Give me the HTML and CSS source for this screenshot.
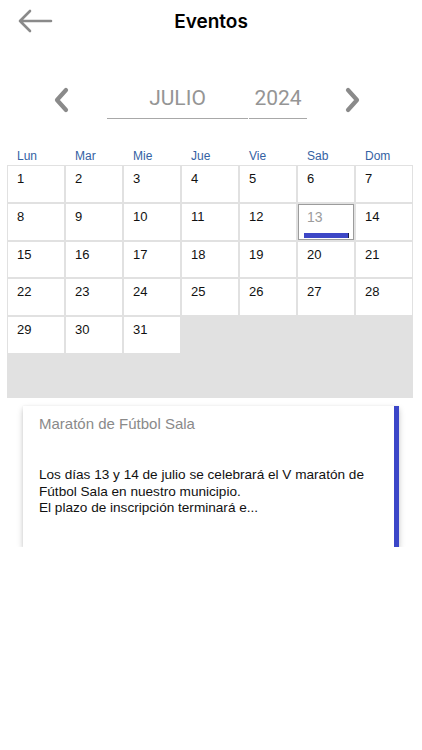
FILE: index.html
```html
<!DOCTYPE html>
<html lang="es">
<head>
<meta charset="utf-8">
<title>Eventos</title>
<link rel="stylesheet" href="styles.css">
</head>
<body>
<header class="topbar">
  <div class="back">
    <svg width="36" height="24" viewBox="0 0 36 24"><path d="M34 12H3 M13 2L3 12L13 22" fill="none" stroke="#8a8a8a" stroke-width="2.6" stroke-linecap="round" stroke-linejoin="round"/></svg>
  </div>
  <h1 class="title">Eventos</h1>
  <div></div>
</header>

<nav class="monthnav">
  <svg class="chev" width="16" height="26" viewBox="0 0 16 26"><path d="M13 3L4 13L13 23" fill="none" stroke="#8a8a8a" stroke-width="4.2" stroke-linecap="round" stroke-linejoin="round"/></svg>
  <div class="field month">JULIO</div>
  <div class="field year">2024</div>
  <svg class="chev right" width="16" height="26" viewBox="0 0 16 26"><path d="M3 3L12 13L3 23" fill="none" stroke="#8a8a8a" stroke-width="4.2" stroke-linecap="round" stroke-linejoin="round"/></svg>
</nav>

<div class="weekdays">
  <span>Lun</span><span>Mar</span><span>Mie</span><span>Jue</span><span>Vie</span><span>Sab</span><span>Dom</span>
</div>

<div class="calendar">
  <div class="day">1</div><div class="day">2</div><div class="day">3</div><div class="day">4</div><div class="day">5</div><div class="day">6</div><div class="day">7</div>
  <div class="day">8</div><div class="day">9</div><div class="day">10</div><div class="day">11</div><div class="day">12</div><div class="day selected">13<span class="event-bar"></span></div><div class="day">14</div>
  <div class="day">15</div><div class="day">16</div><div class="day">17</div><div class="day">18</div><div class="day">19</div><div class="day">20</div><div class="day">21</div>
  <div class="day">22</div><div class="day">23</div><div class="day">24</div><div class="day">25</div><div class="day">26</div><div class="day">27</div><div class="day">28</div>
  <div class="day">29</div><div class="day">30</div><div class="day">31</div>
</div>

<article class="card">
  <h2 class="card-title">Maratón de Fútbol Sala</h2>
  <p class="card-text">Los días 13 y 14 de julio se celebrará el V maratón de Fútbol Sala en nuestro municipio.<br>El plazo de inscripción terminará e...</p>
</article>
</body>
</html>
```

FILE: styles.css
```css
* { box-sizing: border-box; }
html, body { margin: 0; padding: 0; background: #fff; }
body {
  width: 422px;
  font-family: "Liberation Sans", Arial, sans-serif;
  color: #111;
}

.topbar {
  display: grid;
  grid-template-columns: 60px 1fr 60px;
  align-items: center;
  height: 42px;
}
.back {
  padding-left: 17px;
  display: flex;
  align-items: center;
  height: 42px;
}
.title {
  margin: 0;
  text-align: center;
  font-family: Inter, "Liberation Sans", sans-serif;
  font-size: 19px;
  font-weight: 600;
  color: #000;
}

.monthnav {
  display: flex;
  align-items: center;
  margin-top: 38px;
  height: 39px;
  padding-left: 53px;
}
.chev { display: block; }
.chev.right { margin-left: 38px; }
.field {
  height: 39px;
  line-height: 37px;
  border-bottom: 1px solid #a8a8a8;
  text-align: center;
  font-family: Roboto, "Liberation Sans", sans-serif;
  font-weight: 400;
  font-size: 21px;
  color: #959595;
}
.month { width: 141px; margin-left: 38px; }
.year { width: 58px; margin-left: 1px; }

.weekdays {
  display: grid;
  grid-template-columns: repeat(7, 56px);
  column-gap: 2px;
  margin: 30px 0 0 8px;
  height: 16px;
  line-height: 14px;
  font-size: 12px;
  color: #3462a3;
}
.weekdays span { padding-left: 9px; }

.calendar {
  display: grid;
  grid-template-columns: repeat(7, 56px);
  grid-auto-rows: 35.75px;
  gap: 2px;
  align-content: start;
  width: 406px;
  height: 233px;
  margin-left: 7px;
  padding: 1px;
  background: #e1e1e1;
}
.day {
  display: flex;
  flex-direction: column;
  background: #fff;
  padding: 5px 9px 0;
  font-size: 13px;
  line-height: 15px;
  color: #111;
}
.day.selected {
  border: 1px solid #9c9c9c;
  padding: 5px 4px 1px 8px;
  color: #9c9c9c;
  font-size: 14px;
}
.event-bar {
  display: block;
  margin-top: auto;
  margin-left: -3px;
  height: 5px;
  background: #3d47c6;
  border-right: 1.5px solid #1b1d45;
}

.card {
  margin: 8px 0 0 23px;
  width: 376px;
  height: 141px;
  padding: 9px 16px 0;
  background: #fff;
  border-right: 5px solid #3b46c8;
  box-shadow: 0 3px 6px rgba(0, 0, 0, 0.22), 0 0 2px rgba(0, 0, 0, 0.06);
}
.card-title {
  margin: 0;
  font-size: 15px;
  line-height: 17px;
  font-weight: normal;
  color: #8a8a8a;
}
.card-text {
  margin: 35px 0 0;
  font-size: 13.6px;
  line-height: 16.5px;
  color: #111;
}
```
